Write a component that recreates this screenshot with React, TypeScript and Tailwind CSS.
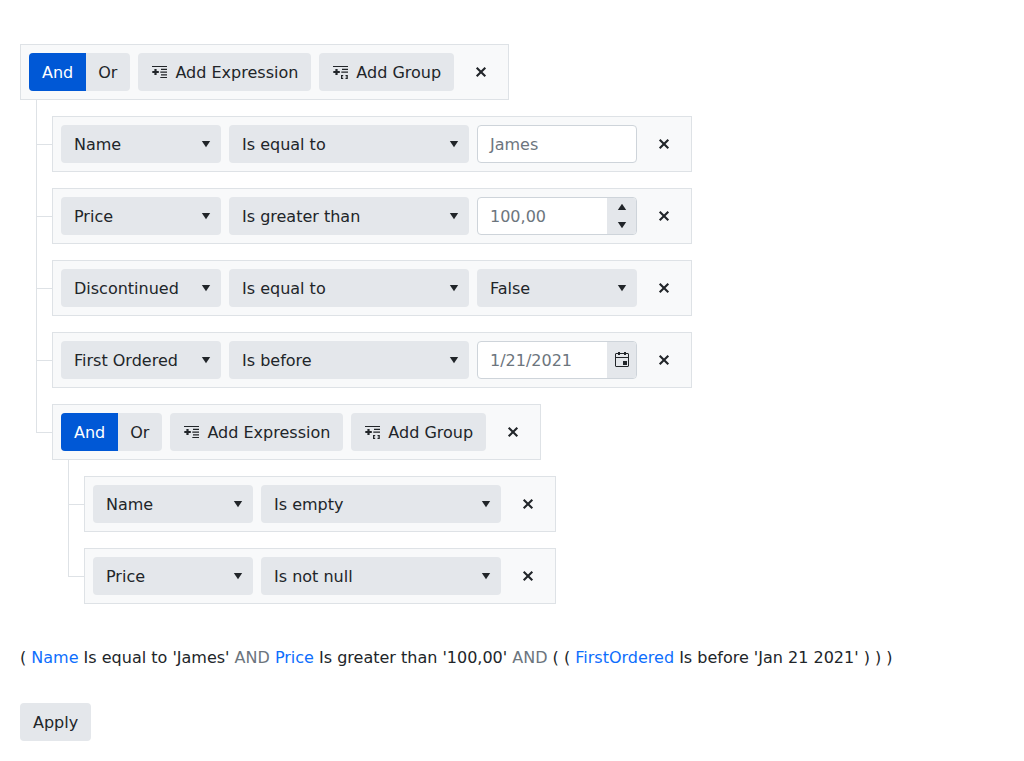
import type { ReactNode } from "react";

function CaretDown() {
  return (
    <svg width="16" height="16" viewBox="0 0 16 16" fill="currentColor">
      <path d="M3.8 5h8.4L8 11.2z" />
    </svg>
  );
}

function CaretUp() {
  return (
    <svg width="16" height="16" viewBox="0 0 16 16" fill="currentColor">
      <path d="M3.8 11h8.4L8 4.8z" />
    </svg>
  );
}

function ExpressionIcon() {
  return (
    <svg width="16" height="16" viewBox="0 0 16 16" fill="currentColor">
      <path d="M1 2h15v1H1zM10 4.7h6v1.3h-6zM9.3 7.4h6.7v1.4H9.3zM10 10.2h6v1.3h-6zM9.3 13h6.7v1H9.3z" />
      <path d="M3.4 5h2.2v1.9h2.2v2.2H5.600v1.900H3.400V9.100H1.300V6.900h2.100z" />
    </svg>
  );
}

function GroupIcon() {
  return (
    <svg width="16" height="16" viewBox="0 0 16 16" fill="currentColor">
      <path d="M1 2h15v1H1zM10 4.7h6v1.3h-6zM9.3 7.4h6.7v1.4H9.300z" />
      <path d="M3.400 5h2.200v1.900h2.200v2.200H5.600v1.900H3.400V9.100H1.300V6.900h2.100z" />
      <path d="M9 11h2.200v1.200H10.200v1.600h1v1.200H9zM13.500 11h2.300v4h-2.300v-1.200h1v-1.600h-1z" />
    </svg>
  );
}

function CalendarIcon() {
  return (
    <svg width="16" height="16" viewBox="0 0 16 16" fill="currentColor">
      <path fillRule="evenodd" d="M2 1h12l1 1v12l-1 1H2l-1-1V2zM2 2v3h12V2zM2 6v8h12V6z" />
      <path d="M4 0h2v3H4zM10 0h2v3h-2zM9 9h4v4H9z" />
    </svg>
  );
}

function CloseButton() {
  return (
    <button className="flex size-[38px] items-center justify-center" aria-label="Remove">
      <svg width="16" height="16" viewBox="0 0 16 16" fill="none" stroke="currentColor" strokeWidth="2.1">
        <path d="M3.7 3.7l8.6 8.600M12.300 3.700l-8.600 8.600" />
      </svg>
    </button>
  );
}

function Panel({ children }: { children: ReactNode }) {
  return (
    <div className="flex w-max gap-2 border border-[#dee2e6] bg-[#f8f9fa] p-2">
      {children}
      <CloseButton />
    </div>
  );
}

function Select({ value, wide = false }: { value: string; wide?: boolean }) {
  return (
    <button
      className={`flex h-[38px] items-center justify-between rounded bg-[#e4e7eb] pr-[7px] pl-[13px] ${wide ? "w-60" : "w-40"}`}
    >
      <span className="pt-0.5">{value}</span>
      <CaretDown />
    </button>
  );
}

function Field({ value, addon }: { value: string; addon?: ReactNode }) {
  return (
    <div className="flex h-[38px] w-40 overflow-hidden rounded border border-[#ced4da] bg-white">
      <span className="flex flex-1 items-center pt-0.5 pl-3 text-[#6c757d]">{value}</span>
      {addon}
    </div>
  );
}

function GroupToolbar() {
  return (
    <Panel>
      <div className="flex h-[38px] overflow-hidden rounded bg-[#e4e7eb]">
        <button className="bg-[#0058d6] px-[13px] pt-0.5 text-white">And</button>
        <button className="pt-0.5 pr-[13px] pl-3">Or</button>
      </div>
      <button className="flex h-[38px] items-center gap-2 rounded bg-[#e4e7eb] px-[13px]">
        <ExpressionIcon />
        <span className="pt-0.5">Add Expression</span>
      </button>
      <button className="flex h-[38px] items-center gap-2 rounded bg-[#e4e7eb] px-[13px]">
        <GroupIcon />
        <span className="pt-0.5">Add Group</span>
      </button>
    </Panel>
  );
}

function Branch({ children, last = false }: { children: ReactNode; last?: boolean }) {
  return (
    <li className="flex">
      <div className="flex w-4 shrink-0 flex-col">
        <div className="h-[45px] border-b border-l border-[#dee2e6]" />
        {!last && <div className="flex-1 border-l border-[#dee2e6]" />}
      </div>
      <div className="pt-4">{children}</div>
    </li>
  );
}

const spinner = (
  <div className="flex w-[29px] flex-col items-center justify-around bg-[#e4e7eb] pl-px">
    <CaretUp />
    <CaretDown />
  </div>
);

const calendar = (
  <div className="flex w-[29px] items-center justify-center bg-[#e4e7eb] pl-px">
    <CalendarIcon />
  </div>
);

export default function App() {
  return (
    <main className="min-h-[761px] bg-white px-5 pt-11 font-['DejaVu_Sans',sans-serif] text-base leading-6 text-[#212529]">
      <GroupToolbar />
      <ul className="pl-4">
        <Branch>
          <Panel>
            <Select value="Name" />
            <Select value="Is equal to" wide />
            <Field value="James" />
          </Panel>
        </Branch>
        <Branch>
          <Panel>
            <Select value="Price" />
            <Select value="Is greater than" wide />
            <Field value="100,00" addon={spinner} />
          </Panel>
        </Branch>
        <Branch>
          <Panel>
            <Select value="Discontinued" />
            <Select value="Is equal to" wide />
            <Select value="False" />
          </Panel>
        </Branch>
        <Branch>
          <Panel>
            <Select value="First Ordered" />
            <Select value="Is before" wide />
            <Field value="1/21/2021" addon={calendar} />
          </Panel>
        </Branch>
        <Branch last>
          <GroupToolbar />
          <ul className="pl-4">
            <Branch>
              <Panel>
                <Select value="Name" />
                <Select value="Is empty" wide />
              </Panel>
            </Branch>
            <Branch last>
              <Panel>
                <Select value="Price" />
                <Select value="Is not null" wide />
              </Panel>
            </Branch>
          </ul>
        </Branch>
      </ul>
      <p className="mt-[42px] whitespace-nowrap">
        ( <span className="text-[#0d6efd]">Name</span> Is equal to 'James' <span className="text-[#6c757d]">AND</span>{" "}
        <span className="text-[#0d6efd]">Price</span> Is greater than '100,00'{" "}
        <span className="text-[#6c757d]">AND</span> ( ( <span className="text-[#0d6efd]">FirstOrdered</span> Is before
        'Jan 21 2021' ) ) )
      </p>
      <button className="mt-[33px] h-[38px] rounded bg-[#e4e7eb] px-[13px] pt-0.5">Apply</button>
    </main>
  );
}
